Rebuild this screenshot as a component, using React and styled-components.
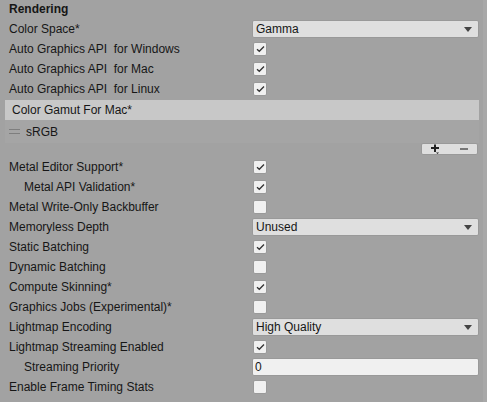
import React from "react";
import styled, { createGlobalStyle } from "styled-components";

const Global = createGlobalStyle`
  html, body { margin: 0; padding: 0; background: #a2a2a2; }
  body { font-family: "Liberation Sans", Arial, sans-serif; font-size: 12px; color: #111; }
`;

const Page = styled.div`
  display: flex;
  width: 487px;
  height: 402px;
  overflow: hidden;
  background: #a2a2a2;
  font-family: "Liberation Sans", Arial, Helvetica, sans-serif;
  font-size: 12px;
  color: #161616;
`;

const Content = styled.div`
  flex: 1;
  display: flex;
  flex-direction: column;
`;

const Scrollbar = styled.div`
  width: 4px;
  background: #a8a8a8;
`;

const Header = styled.div`
  height: 19px;
  line-height: 19px;
  padding-left: 9px;
  font-weight: bold;
`;

const Row = styled.div`
  display: grid;
  align-items: center;
  height: 20px;
  padding-left: ${(p) => (p.$indent ? 24 : 9)}px;
  grid-template-columns: ${(p) => (p.$indent ? 228 : 243)}px 227px;
`;

const Label = styled.span`
  white-space: pre;
`;

const Dropdown = styled.div`
  height: 16px;
  border: 1px solid #999;
  border-radius: 2px;
  background: #dfdfdf;
  display: flex;
  align-items: center;
  justify-content: space-between;
  padding: 0 6px 0 3px;
`;

const Caret = styled.span`
  width: 0;
  height: 0;
  border-left: 4px solid transparent;
  border-right: 4px solid transparent;
  border-top: 5px solid #444;
`;

const Box = styled.div`
  width: 12px;
  height: 12px;
  border: 1px solid #999;
  border-radius: 2px;
  background: #f0f0f0;
  margin-left: 1px;
  display: flex;
  align-items: center;
  justify-content: center;
`;

const TextField = styled.div`
  height: 16px;
  border: 1px solid #999;
  border-radius: 2px;
  background: #f0f0f0;
  padding-left: 2px;
  display: flex;
  align-items: center;
`;

const List = styled.div`
  margin: 1px 4px 0 5px;
  display: flex;
  flex-direction: column;
`;

const ListHeader = styled.div`
  height: 20px;
  line-height: 20px;
  background: #c8c8c8;
  padding-left: 7px;
`;

const ListBody = styled.div`
  height: 23px;
  background: #a5a5a5;
  display: flex;
  align-items: center;
`;

const ListItem = styled.div`
  height: 20px;
  display: flex;
  align-items: center;
  gap: 6px;
  padding-left: 4px;
`;

const Handle = styled.span`
  width: 11px;
  height: 3px;
  border-top: 1px solid #7e7e7e;
  border-bottom: 1px solid #7e7e7e;
`;

const Footer = styled.div`
  display: flex;
  justify-content: flex-end;
  margin-right: 5px;
  height: 14px;
`;

const FooterButtons = styled.div`
  width: 55px;
  height: 10px;
  background: #dedede;
  border: 1px solid #999;
  border-radius: 2px;
  display: flex;
  align-items: center;
  justify-content: space-around;
`;

const Check = () => (
  <svg width="9" height="8" viewBox="0 0 9 8">
    <path d="M1 4.2 L3.3 6.3 L8 1.5" fill="none" stroke="#333" strokeWidth="1.3" />
  </svg>
);

const CheckRow = ({ label, checked, indent }) => (
  <Row $indent={indent}>
    <Label>{label}</Label>
    <Box>{checked && <Check />}</Box>
  </Row>
);

const DropRow = ({ label, value }) => (
  <Row>
    <Label>{label}</Label>
    <Dropdown>
      <span>{value}</span>
      <Caret />
    </Dropdown>
  </Row>
);

export default function App() {
  return (
    <Page>
      <Global />
      <Content>
        <Header>Rendering</Header>
        <DropRow label="Color Space*" value="Gamma" />
        <CheckRow label="Auto Graphics API  for Windows" checked />
        <CheckRow label="Auto Graphics API  for Mac" checked />
        <CheckRow label="Auto Graphics API  for Linux" checked />
        <List>
          <ListHeader>Color Gamut For Mac*</ListHeader>
          <ListBody>
            <ListItem>
              <Handle />
              <span>sRGB</span>
            </ListItem>
          </ListBody>
        </List>
        <Footer>
          <FooterButtons>
            <svg width="12" height="10" viewBox="0 0 12 10">
              <path d="M1 4 H9 M5 0.5 V8" stroke="#222" strokeWidth="2" />
              <path d="M6 8.5 H9 L7.5 10 Z" fill="#222" />
            </svg>
            <svg width="10" height="4" viewBox="0 0 10 4">
              <path d="M1 2 H9" stroke="#777" strokeWidth="2" />
            </svg>
          </FooterButtons>
        </Footer>
        <CheckRow label="Metal Editor Support*" checked />
        <CheckRow label="Metal API Validation*" checked indent />
        <CheckRow label="Metal Write-Only Backbuffer" />
        <DropRow label="Memoryless Depth" value="Unused" />
        <CheckRow label="Static Batching" checked />
        <CheckRow label="Dynamic Batching" />
        <CheckRow label="Compute Skinning*" checked />
        <CheckRow label="Graphics Jobs (Experimental)*" />
        <DropRow label="Lightmap Encoding" value="High Quality" />
        <CheckRow label="Lightmap Streaming Enabled" checked />
        <Row $indent>
          <Label>Streaming Priority</Label>
          <TextField>0</TextField>
        </Row>
        <CheckRow label="Enable Frame Timing Stats" />
      </Content>
      <Scrollbar />
    </Page>
  );
}
